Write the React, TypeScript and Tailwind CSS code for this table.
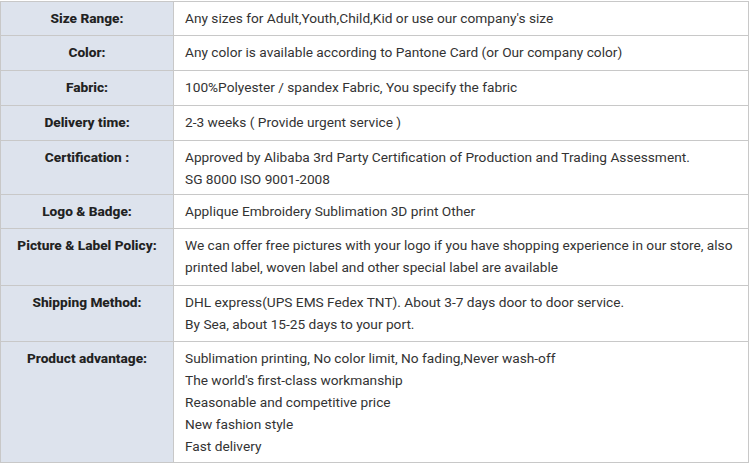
type SpecRow = {
  label: string;
  lines: string[];
  height: string;
};

const rows: SpecRow[] = [
  { label: "Size Range:", lines: ["Any sizes for Adult,Youth,Child,Kid or use our company's size"], height: "h-[34px]" },
  { label: "Color:", lines: ["Any color is available according to Pantone Card (or Our company color)"], height: "h-[35px]" },
  { label: "Fabric:", lines: ["100%Polyester / spandex Fabric, You specify the fabric"], height: "h-[35px]" },
  { label: "Delivery time:", lines: ["2-3 weeks ( Provide urgent service )"], height: "h-[35px]" },
  {
    label: "Certification :",
    lines: ["Approved by Alibaba 3rd Party Certification of Production and Trading Assessment.", "SG 8000 ISO 9001-2008"],
    height: "h-[54px]",
  },
  { label: "Logo & Badge:", lines: ["Applique Embroidery Sublimation 3D print Other"], height: "h-[34px]" },
  {
    label: "Picture & Label Policy:",
    lines: [
      "We can offer free pictures with your logo if you have shopping experience in our store, also",
      "printed label, woven label and other special label are available",
    ],
    height: "h-[57px]",
  },
  {
    label: "Shipping Method:",
    lines: ["DHL express(UPS EMS Fedex TNT). About 3-7 days door to door service.", "By Sea, about 15-25 days to your port."],
    height: "h-[56px]",
  },
  {
    label: "Product advantage:",
    lines: [
      "Sublimation printing, No color limit, No fading,Never wash-off",
      "The world's first-class workmanship",
      "Reasonable and competitive price",
      "New fashion style",
      "Fast delivery",
    ],
    height: "h-[121px]",
  },
];

export default function App() {
  return (
    <main className="h-[464px] w-[750px] bg-white pt-px font-['Roboto',sans-serif] text-[13.7px]">
      <table className="w-[749px] table-fixed border-collapse border border-[#c8c8c8]">
        <colgroup>
          <col className="w-[173px]" />
          <col />
        </colgroup>
        <tbody>
          {rows.map((row) => (
            <tr key={row.label} className={row.height}>
              <th className="border border-[#c8c8c8] bg-[#dde3ed] px-1 pt-[5px] align-top text-center font-extrabold leading-[22px] text-[#222]">
                {row.label}
              </th>
              <td className="border border-[#c8c8c8] bg-white pl-[11px] pr-2 pt-[5px] align-top leading-[22px] text-[#333]">
                {row.lines.map((line) => (
                  <div key={line} className="whitespace-nowrap">
                    {line}
                  </div>
                ))}
              </td>
            </tr>
          ))}
        </tbody>
      </table>
    </main>
  );
}
